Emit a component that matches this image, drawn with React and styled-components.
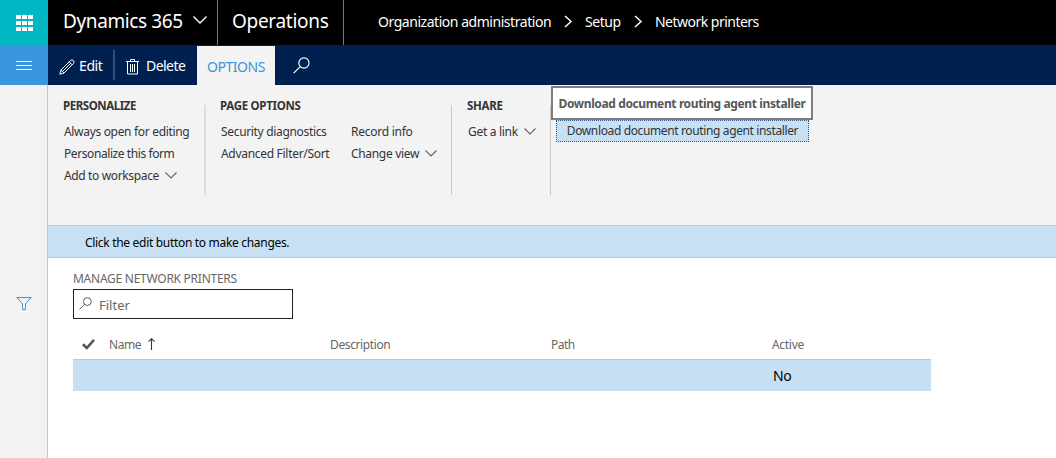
import React from "react";
import styled, { createGlobalStyle } from "styled-components";

const Global = createGlobalStyle`
  *, *::before, *::after { box-sizing: border-box; }
  body { margin: 0; background: #fff; font-family: "Noto Sans", "Open Sans", sans-serif; font-size: 12px; color: #333; }
  button, input { font: inherit; }
`;

const Shell = styled.div`
  display: grid;
  grid-template-columns: 48px 1fr;
  height: 458px;
  overflow: hidden;
`;
const Rail = styled.nav`
  display: flex;
  flex-direction: column;
  background: #f2f2f2;
`;
const RailTile = styled.div`
  display: flex;
  align-items: center;
  justify-content: center;
  height: ${(p) => p.$h}px;
  padding-top: ${(p) => p.$pt || 0}px;
  background: ${(p) => p.$bg};
`;
const RailBody = styled.div`
  flex: 1;
  border-right: 1px solid #c6c6c6;
  padding: 211px 0 0 16px;
  svg { display: block; }
`;
const Main = styled.div`
  display: flex;
  flex-direction: column;
  min-width: 0;
`;
const Label = styled.span`
  white-space: nowrap;
  letter-spacing: ${(p) => p.$ls || 0}px;
`;

const TopBar = styled.header`
  display: flex;
  height: 45px;
  background: #000;
  color: #fff;
`;
const Brand = styled.div`
  display: flex;
  align-items: center;
  width: ${(p) => p.$w}px;
  padding: 0 0 3px ${(p) => p.$pl}px;
  border-right: 1px solid #777;
  font-size: 19px;
  svg { margin: 0 10px 2px auto; }
`;
const Crumbs = styled.div`
  display: flex;
  align-items: center;
  padding: 0 0 2px 34px;
  font-size: 14px;
`;
const Crumb = styled(Label)`
  width: ${(p) => p.$w}px;
`;
const CrumbArrow = styled.svg`
  width: 9px;
  height: 13px;
  margin: 0 ${(p) => p.$mr}px 1px 0;
`;

const ActionBar = styled.div`
  display: flex;
  height: 40px;
  background: #002050;
  color: #fff;
  font-size: 14px;
`;
const Action = styled.div`
  display: flex;
  align-items: center;
  gap: ${(p) => p.$gap}px;
  width: ${(p) => p.$w}px;
  padding: 1px 0 0 ${(p) => p.$pl}px;
  svg { margin-top: 2px; }
`;
const ActionRule = styled.div`
  width: 2px;
  height: 30px;
  margin-top: 5px;
  background: #334d73;
`;
const Tab = styled.div`
  display: flex;
  align-items: center;
  justify-content: center;
  width: 78px;
  height: 39px;
  margin-top: 1px;
  padding-top: 2px;
  background: #f3f3f3;
  color: #3a96dd;
`;
const SearchAction = styled.div`
  padding: 12px 0 0 18px;
`;

const Ribbon = styled.section`
  position: relative;
  display: flex;
  height: 141px;
  padding: 20px 0 0 0;
  background: #f3f3f3;
  border-bottom: 1px solid #c6c6c6;
`;
const Group = styled.div`
  width: ${(p) => p.$w}px;
  height: 90px;
  padding-left: ${(p) => p.$pl}px;
  border-right: ${(p) => p.$rule || 1}px solid ${(p) => (p.$rule ? "#dcdcdc" : "#c8c8c8")};
`;
const GroupTitle = styled.div`
  height: 16px;
  margin-top: -7px;
  line-height: 16px;
  font-size: 11.5px;
  font-weight: 700;
`;
const GroupCols = styled.div`
  display: flex;
  padding: 6px 0 0 1px;
`;
const GroupCol = styled.div`
  width: ${(p) => p.$w || 130}px;
`;
const Item = styled.div`
  display: flex;
  align-items: center;
  gap: 6px;
  height: 22px;
  white-space: nowrap;
`;
const FocusedItem = styled.div`
  display: flex;
  align-items: center;
  justify-content: center;
  width: 253px;
  height: 22px;
  margin: 15px 0 0 5px;
  padding-bottom: 2px;
  border: 1px dotted #33557f;
  background: #c7e0f4;
`;
const Tooltip = styled.div`
  position: absolute;
  left: 503px;
  top: 1px;
  display: flex;
  align-items: center;
  justify-content: center;
  width: 262px;
  height: 34px;
  border: 2px solid #7d7d7d;
  background: #fff;
  color: #575757;
  font-weight: 700;
`;

const Message = styled.div`
  display: flex;
  align-items: center;
  height: 32px;
  padding: 2px 0 0 37px;
  background: #c7e0f4;
  border-bottom: 1px solid #c6c6c6;
  color: #000;
`;
const Content = styled.main`
  padding: 12px 0 0 25px;
`;
const Heading = styled.div`
  height: 19px;
  line-height: 17px;
  color: #666;
`;
const FilterBox = styled.div`
  display: flex;
  align-items: center;
  gap: 7px;
  width: 220px;
  height: 30px;
  padding: 2px 0 0 5px;
  border: 1px solid #222;
  color: #666;
  font-size: 13px;
  svg { margin-bottom: 3px; }
`;
const GridRow = styled.div`
  display: grid;
  grid-template-columns: 30px 221px 221px 221px 165px;
  width: 858px;
`;
const HeadRow = styled(GridRow)`
  height: 41px;
  padding-top: 10px;
  border-bottom: 1px solid #c6c6c6;
  color: #666;
`;
const BodyRow = styled(GridRow)`
  height: 31px;
  background: #c7dff3;
  color: #000;
  font-size: 14px;
`;
const Cell = styled.div`
  display: flex;
  align-items: center;
  gap: 7px;
  padding-left: ${(p) => p.$pl ?? 6}px;
`;

const Chevron = ({ w = 12, h = 7, color = "#666", sw = 1.15 }) => (
  <svg width={w} height={h} viewBox={`0 0 ${w} ${h}`} fill="none" stroke={color} strokeWidth={sw}>
    <path d={`M.5 .5 L${w / 2} ${h - 1} L${w - 0.5} .5`} />
  </svg>
);
const Magnifier = ({ size, color, sw = 1.2 }) => (
  <svg width={size} height={size} viewBox="0 0 16 16" fill="none" stroke={color} strokeWidth={sw}>
    <circle cx="10.3" cy="5.6" r="4.8" />
    <path d="M6.9 9 L.6 15.2" />
  </svg>
);
const Waffle = () => (
  <svg width="17" height="16" viewBox="0 0 17 16" fill="#fff">
    {[0, 6, 12].map((x) => [0, 6, 12].map((y) => <rect key={`${x}-${y}`} x={x} y={y} width="5" height="4" />))}
  </svg>
);
const Menu = () => (
  <svg width="16" height="10" viewBox="0 0 16 10" fill="#fff">
    <path d="M0 0h16v1H0zM0 4h16v1H0zM0 8h16v1H0z" />
  </svg>
);
const Pencil = () => (
  <svg width="16" height="16" viewBox="0 0 16 16" fill="none" stroke="#fff" strokeWidth="1">
    <path d="M.8 15.2 L2 11 L11.5 1.5 Q13 .2 14.4 1.6 Q15.8 3 14.5 4.5 L5 14 Z M2 11 L5 14 M10.2 2.8 L13.2 5.8 M3.6 12.4 L12 4" />
  </svg>
);
const Trash = () => (
  <svg width="13" height="16" viewBox="0 0 13 16" fill="none" stroke="#fff">
    <path d="M0 2.5h13M4.5 2.5v-2h4v2M1.5 2.5v12.5h10V2.5M4.5 5v8M6.5 5v8M8.5 5v8" />
  </svg>
);
const Funnel = () => (
  <svg width="16" height="15" viewBox="0 0 16 15" fill="none" stroke="#3a96dd">
    <path d="M.8 1.5h14.4L9.5 8v5.5h-3V8z" />
  </svg>
);
const Check = () => (
  <svg width="13" height="11" viewBox="0 0 13 11" fill="none" stroke="#555" strokeWidth="2.6">
    <path d="M.9 5.3 L4.8 9 L12 .9" />
  </svg>
);
const SortUp = () => (
  <svg width="7" height="12" viewBox="0 0 7 12" fill="none" stroke="#333" strokeWidth="1.1">
    <path d="M3.5 12V1M.5 3.7l3-3 3 3" />
  </svg>
);

export default function App() {
  return (
    <Shell>
      <Global />
      <Rail>
        <RailTile $h={45} $pt={0} $bg="#00b7c3"><Waffle /></RailTile>
        <RailTile $h={40} $pt={2} $bg="#3a96dd"><Menu /></RailTile>
        <RailBody><Funnel /></RailBody>
      </Rail>
      <Main>
        <TopBar>
          <Brand $w={170} $pl={15}>
            <Label $ls={-0.38}>Dynamics 365</Label>
            <Chevron w={14} h={8} color="#fff" sw={1.4} />
          </Brand>
          <Brand $w={126} $pl={14}><Label $ls={-0.3}>Operations</Label></Brand>
          <Crumbs>
            <Crumb $w={186} $ls={-0.46}>Organization administration</Crumb>
            <CrumbArrow $mr={12} viewBox="0 0 9 13" fill="none" stroke="#fff" strokeWidth="1.5"><path d="M1 1l6 5.5L1 12" /></CrumbArrow>
            <Crumb $w={49} $ls={-0.45}>Setup</Crumb>
            <CrumbArrow $mr={12} viewBox="0 0 9 13" fill="none" stroke="#fff" strokeWidth="1.5"><path d="M1 1l6 5.5L1 12" /></CrumbArrow>
            <Crumb $ls={-0.52}>Network printers</Crumb>
          </Crumbs>
        </TopBar>
        <ActionBar>
          <Action $w={65} $pl={11} $gap={4}><Pencil /><Label $ls={-0.4}>Edit</Label></Action>
          <ActionRule />
          <Action $w={82} $pl={11} $gap={7}><Trash /><Label $ls={-0.55}>Delete</Label></Action>
          <Tab><Label $ls={-0.45}>OPTIONS</Label></Tab>
          <SearchAction><Magnifier size={17} color="#fff" sw={1.1} /></SearchAction>
        </ActionBar>
        <Ribbon>
          <Group $w={158} $pl={15} $rule={2}>
            <GroupTitle><Label $ls={-0.45}>PERSONALIZE</Label></GroupTitle>
            <GroupCols>
              <GroupCol>
                <Item><Label $ls={-0.32}>Always open for editing</Label></Item>
                <Item><Label $ls={-0.42}>Personalize this form</Label></Item>
                <Item><Label $ls={-0.36}>Add to workspace</Label><Chevron /></Item>
              </GroupCol>
            </GroupCols>
          </Group>
          <Group $w={246} $pl={14}>
            <GroupTitle><Label $ls={-0.3}>PAGE OPTIONS</Label></GroupTitle>
            <GroupCols>
              <GroupCol>
                <Item><Label $ls={-0.33}>Security diagnostics</Label></Item>
                <Item><Label $ls={-0.3}>Advanced Filter/Sort</Label></Item>
              </GroupCol>
              <GroupCol $w={90}>
                <Item><Label $ls={-0.26}>Record info</Label></Item>
                <Item><Label $ls={-0.32}>Change view</Label><Chevron /></Item>
              </GroupCol>
            </GroupCols>
          </Group>
          <Group $w={99} $pl={15}>
            <GroupTitle><Label $ls={-0.3}>SHARE</Label></GroupTitle>
            <GroupCols>
              <GroupCol $w={75}>
                <Item><Label $ls={-0.3}>Get a link</Label><Chevron /></Item>
              </GroupCol>
            </GroupCols>
          </Group>
          <FocusedItem><Label $ls={-0.37}>Download document routing agent installer</Label></FocusedItem>
          <Tooltip><Label $ls={-0.38}>Download document routing agent installer</Label></Tooltip>
        </Ribbon>
        <Message><Label $ls={-0.31}>Click the edit button to make changes.</Label></Message>
        <Content>
          <Heading><Label $ls={-0.26}>MANAGE NETWORK PRINTERS</Label></Heading>
          <FilterBox><Magnifier size={13} color="#555" /><Label>Filter</Label></FilterBox>
          <HeadRow>
            <Cell $pl={9}><Check /></Cell>
            <Cell><Label $ls={-0.4}>Name</Label><SortUp /></Cell>
            <Cell><Label $ls={-0.38}>Description</Label></Cell>
            <Cell><Label $ls={-0.5}>Path</Label></Cell>
            <Cell><Label $ls={-0.3}>Active</Label></Cell>
          </HeadRow>
          <BodyRow>
            <Cell /><Cell /><Cell /><Cell />
            <Cell $pl={7}><Label $ls={-0.3}>No</Label></Cell>
          </BodyRow>
        </Content>
      </Main>
    </Shell>
  );
}
